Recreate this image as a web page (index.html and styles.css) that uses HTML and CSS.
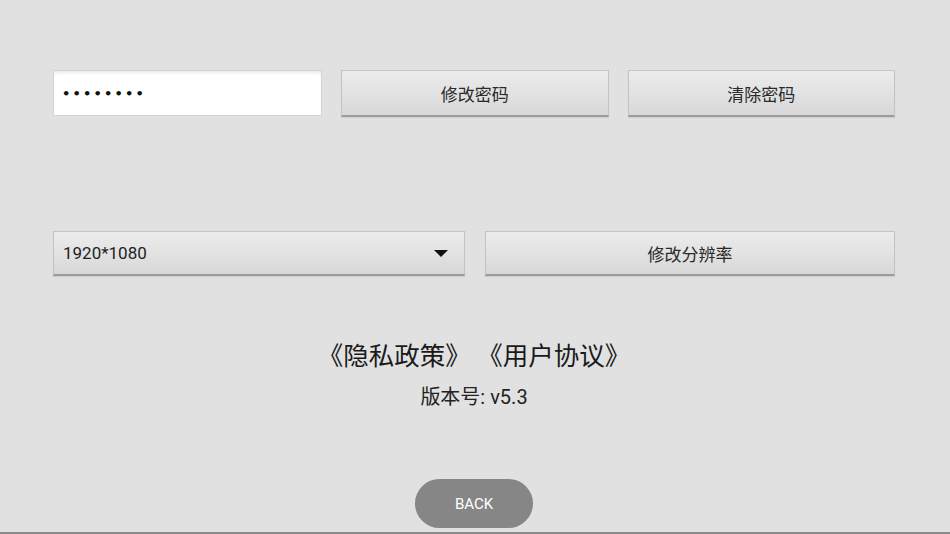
FILE: index.html
```html
<!DOCTYPE html>
<html>
<head>
  <meta charset="utf-8">
  <meta name="viewport" content="width=device-width, initial-scale=1">
  <title>设置</title>
  <link rel="stylesheet" href="styles.css">
</head>
<body>
  <div class="page">
    <div class="row row-password">
      <div class="field">••••••••</div>
      <button class="button">修改密码</button>
      <button class="button">清除密码</button>
    </div>

    <div class="row row-resolution">
      <div class="select">
        <span>1920*1080</span>
        <span class="arrow"></span>
      </div>
      <button class="button">修改分辨率</button>
    </div>

    <p class="links">《隐私政策》 《用户协议》</p>
    <p class="version">版本号: v5.3</p>

    <button class="back">BACK</button>
  </div>
</body>
</html>
```
FILE: styles.css
```css
body {
  background-color: #e1e1e1;
  color: #222222;
  font-family: 'Roboto', 'Noto Sans CJK SC', sans-serif;
  margin: 0;
  padding: 0;
}
.page {
  height: 534px;
  box-sizing: border-box;
  border-bottom: 2px solid #8a8a8a;
  padding: 0 55px 0 53px;
  display: flex;
  flex-direction: column;
  align-items: center;
}
.row {
  width: 100%;
  display: grid;
}
.row-password {
  margin-top: 70px;
  height: 47px;
  grid-template-columns: 269px 1fr 1fr;
  gap: 19px;
}
.row-resolution {
  margin-top: 114px;
  height: 45px;
  grid-template-columns: 412px 1fr;
  gap: 20px;
}
.field {
  background-color: #ffffff;
  border: 1px solid #d4d4d4;
  box-shadow: inset 0 3px 4px -2px rgba(0, 0, 0, 0.12);
  height: 46px;
  box-sizing: border-box;
  display: flex;
  align-items: center;
  padding-left: 8px;
  font-size: 13px;
  letter-spacing: 2.2px;
  color: #111111;
  font-family: 'DejaVu Sans', sans-serif;
  font-weight: bold;
}
.button,
.select {
  background: linear-gradient(to bottom, #ececec, #d8d8d8);
  border: 1px solid #c4c4c4;
  border-bottom: 2px solid #9c9c9c;
  box-shadow: 0 1px 1px rgba(0, 0, 0, 0.08);
  color: #2a2a2a;
  font-family: 'Roboto', 'Noto Sans CJK SC', sans-serif;
  font-size: 17px;
  padding: 0;
  margin: 0;
  cursor: pointer;
}
.select {
  display: flex;
  align-items: center;
  justify-content: space-between;
  padding: 0 16px 0 9px;
  box-sizing: border-box;
  color: #222222;
}
.arrow {
  width: 0;
  height: 0;
  border-left: 7px solid transparent;
  border-right: 7px solid transparent;
  border-top: 7px solid #111111;
}
.links {
  margin: 64px 0 0;
  font-size: 25.5px;
  line-height: 32px;
  color: #1a1a1a;
}
.version {
  margin: 12px 0 0;
  font-size: 20px;
  line-height: 26px;
  color: #222222;
}
.back {
  margin-top: 69px;
  width: 118px;
  height: 49px;
  border: none;
  border-radius: 25px;
  background-color: #868686;
  color: #ffffff;
  font-family: 'Roboto', sans-serif;
  font-size: 15px;
  cursor: pointer;
}
```
